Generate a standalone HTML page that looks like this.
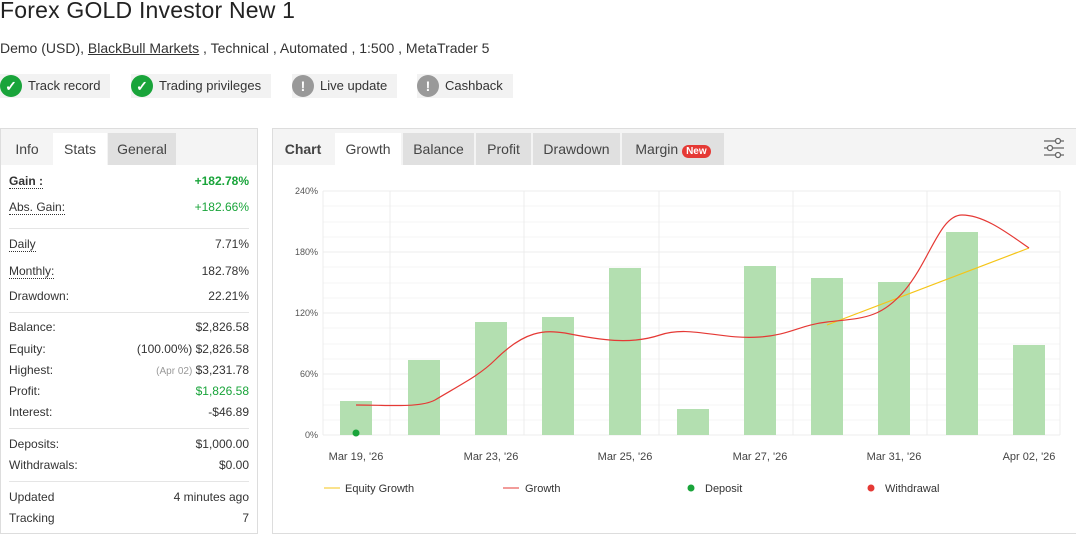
<!DOCTYPE html><html><head><style>
body{margin:0;width:1076px;height:532px;background:#fff;font-family:"Liberation Sans",sans-serif;color:#333;position:relative;overflow:hidden}
.a{position:absolute}
h1{position:absolute;left:0;top:-3px;margin:0;font-size:23px;font-weight:normal;color:#222;letter-spacing:0.2px}
.badge{position:absolute;top:74px;height:24px;background:#f2f2f2;font-size:13px;line-height:24px;padding:0 10px 0 28px}
.badge i{position:absolute;left:0;top:1px;width:22px;height:22px;border-radius:50%;color:#fff;font-style:normal;text-align:center;line-height:22px;font-weight:bold;font-size:14px}
.panel{position:absolute;border:1px solid #ddd;background:#fff}
.tabs{position:absolute;left:0;top:0;right:0;height:36px;background:#f4f4f4}
.tab{position:absolute;top:4px;height:32px;line-height:32px;font-size:14px;text-align:center;background:#e0e0e0;color:#444}
.row{position:absolute;left:8px;right:8px;font-size:12px;height:20px;line-height:20px}
.row span{float:right}
.u{border-bottom:1px dotted #333}
.sep{position:absolute;left:8px;right:8px;border-top:1px solid #e5e5e5}
.g{color:#19a43a}
</style></head><body>
<h1>Forex GOLD Investor New 1</h1>
<div class="a" style="left:0;top:40px;font-size:14px">Demo (USD), <u>BlackBull Markets</u> , Technical , Automated , 1:500 , MetaTrader 5</div>
<div class="badge" style="left:0"><i style="background:#19a43a">✓</i>Track record</div>
<div class="badge" style="left:131px"><i style="background:#19a43a">✓</i>Trading privileges</div>
<div class="badge" style="left:292px"><i style="background:#999">!</i>Live update</div>
<div class="badge" style="left:417px"><i style="background:#999">!</i>Cashback</div>

<div class="panel" style="left:0;top:128px;width:256px;height:404px">
<div class="tabs"></div>
<div class="tab" style="left:0;width:52px;background:#f4f4f4">Info</div>
<div class="tab" style="left:52px;width:54px;background:#fff">Stats</div>
<div class="tab" style="left:107px;width:68px">General</div>
<div class="row" style="top:42px"><b class="u">Gain :</b><span class="g"><b>+182.78%</b></span></div>
<div class="row" style="top:68px"><span class="g">+182.66%</span><i class="u" style="font-style:normal">Abs. Gain:</i></div>
<div class="sep" style="top:99px"></div>
<div class="row" style="top:105px"><span>7.71%</span><i class="u" style="font-style:normal">Daily</i></div>
<div class="row" style="top:132px"><span>182.78%</span><i class="u" style="font-style:normal">Monthly:</i></div>
<div class="row" style="top:157px"><span>22.21%</span>Drawdown:</div>
<div class="sep" style="top:183px"></div>
<div class="row" style="top:188px"><span>$2,826.58</span>Balance:</div>
<div class="row" style="top:210px"><span>(100.00%) $2,826.58</span>Equity:</div>
<div class="row" style="top:231px"><span><small style="color:#999">(Apr 02)</small> $3,231.78</span>Highest:</div>
<div class="row" style="top:252px"><span class="g">$1,826.58</span>Profit:</div>
<div class="row" style="top:273px"><span>-$46.89</span>Interest:</div>
<div class="sep" style="top:299px"></div>
<div class="row" style="top:305px"><span>$1,000.00</span>Deposits:</div>
<div class="row" style="top:326px"><span>$0.00</span>Withdrawals:</div>
<div class="sep" style="top:352px"></div>
<div class="row" style="top:358px"><span>4 minutes ago</span>Updated</div>
<div class="row" style="top:379px"><span>7</span>Tracking</div>
</div>

<div class="panel" style="left:272px;top:128px;width:803px;height:404px">
<div class="tabs"></div>
<div class="tab" style="left:0;width:60px;background:#f4f4f4;font-weight:bold">Chart</div>
<div class="tab" style="left:62px;width:66px;background:#fff">Growth</div>
<div class="tab" style="left:130px;width:71px">Balance</div>
<div class="tab" style="left:203px;width:55px">Profit</div>
<div class="tab" style="left:260px;width:87px">Drawdown</div>
<div class="tab" style="left:349px;width:102px">Margin <span style="background:#e53935;color:#fff;font-size:10px;font-weight:bold;border-radius:7px;padding:1px 4px">New</span></div>
<svg class="a" style="left:770px;top:8px" width="22" height="22" fill="none" stroke="#666" stroke-width="1.3"><path d="M1 4h20M1 11h20M1 18h20"/><circle cx="15" cy="4" r="2.5" fill="#fff"/><circle cx="7" cy="11" r="2.5" fill="#fff"/><circle cx="15" cy="18" r="2.5" fill="#fff"/></svg>
</div>

<svg class="a" style="left:0;top:0" width="1076" height="532" font-family="Liberation Sans" font-size="9" fill="#555">
<g stroke="#f6f6f6"><path d="M323 206h737M323 222h737M323 237h737M323 267h737M323 283h737M323 298h737M323 328h737M323 344h737M323 359h737M323 389h737M323 405h737M323 420h737"/></g>
<g stroke="#ececec"><path d="M323 191h737M323 252h737M323 313h737M323 374h737M323 435h737M323 191v244M390 191v244M524 191v244M659 191v244M793 191v244M927 191v244M1060 191v244"/></g>
<g fill="#b3dfb0"><rect x="340" y="401" width="32" height="34"/><rect x="408" y="360" width="32" height="75"/><rect x="475" y="322" width="32" height="113"/><rect x="542" y="317" width="32" height="118"/><rect x="609" y="268" width="32" height="167"/><rect x="677" y="409" width="32" height="26"/><rect x="744" y="266" width="32" height="169"/><rect x="811" y="278" width="32" height="157"/><rect x="878" y="282" width="32" height="153"/><rect x="946" y="232" width="32" height="203"/><rect x="1013" y="345" width="32" height="90"/></g>
<path d="M827 325L1029 248" stroke="#f5c518" stroke-width="1.2" fill="none"/>
<path d="M356 405C390 405 420 408 435 400C460 385 480 375 495 360C525 330 545 330 565 333C600 340 630 345 660 335C690 325 720 340 760 337C790 335 800 325 827 322C860 318 880 320 905 290C930 260 940 215 962 215C985 215 1010 235 1029 248" stroke="#e53935" stroke-width="1.2" fill="none"/>
<circle cx="356" cy="433" r="3.5" fill="#19a43a"/>
<g text-anchor="end"><text x="318" y="194">240%</text><text x="318" y="255">180%</text><text x="318" y="316">120%</text><text x="318" y="377">60%</text><text x="318" y="438">0%</text></g>
<g font-size="11" fill="#444" text-anchor="middle"><text x="356" y="460">Mar 19, '26</text><text x="491" y="460">Mar 23, '26</text><text x="625" y="460">Mar 25, '26</text><text x="760" y="460">Mar 27, '26</text><text x="894" y="460">Mar 31, '26</text><text x="1029" y="460">Apr 02, '26</text></g>
<g font-size="11" fill="#333"><path d="M324 488h16" stroke="#f5c518"/><text x="345" y="492">Equity Growth</text><path d="M503 488h16" stroke="#e53935"/><text x="525" y="492">Growth</text><circle cx="691" cy="488" r="3.5" fill="#19a43a"/><text x="705" y="492">Deposit</text><circle cx="871" cy="488" r="3.5" fill="#e53935"/><text x="885" y="492">Withdrawal</text></g>
</svg>
</body></html>
